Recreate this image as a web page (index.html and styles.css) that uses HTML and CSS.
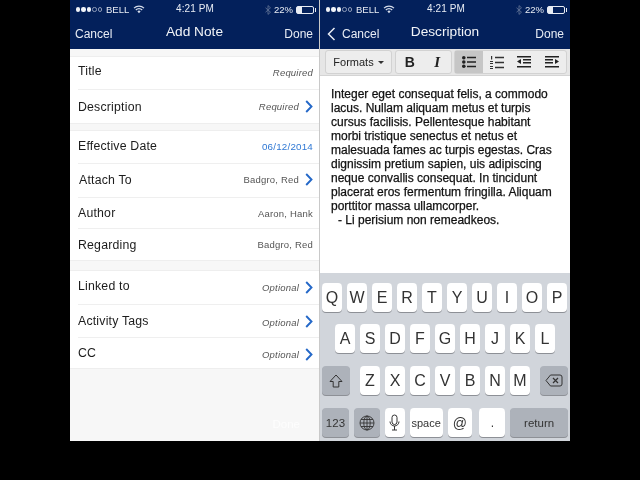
FILE: index.html
```html
<!DOCTYPE html>
<html lang="en">
<head>
  <meta charset="UTF-8">
  <title>Add Note</title>
  <link rel="stylesheet" href="styles.css">
</head>
<body>
  <div class="screens">

    <div class="phone phone-left">
      <div class="topbar">
        <div class="status">
          <div class="status-left">
            <span class="dot"></span><span class="dot"></span><span class="dot"></span><span class="dot off"></span><span class="dot off"></span>
            <span class="carrier">BELL</span>
            <svg class="wifi" width="12" height="9" viewBox="0 0 12 9"><path d="M1 3.200a7 7 0 0 1 10 0M2.800 5a4.500 4.500 0 0 1 6.400 0" fill="none" stroke="#d5dcea" stroke-width="1.200"/><path d="M4.400 6.400a2.200 2.200 0 0 1 3.200 0L6 8.200z" fill="#d5dcea"/></svg>
          </div>
          <span class="time">4:21 PM</span>
          <div class="status-right">
            <svg width="6" height="10" viewBox="0 0 6 10"><path d="M.5 2.800l5 4.400L3 9.400V.6l2.500 2.200-5 4.400" fill="none" stroke="#5d6f93" stroke-width=".9"/></svg>
            <span class="pct">22%</span>
            <span class="battery"><span class="battery-fill"></span></span>
          </div>
        </div>
        <div class="nav">
          <span class="nav-btn">Cancel</span>
          <span class="nav-title">Add Note</span>
          <span class="nav-btn">Done</span>
        </div>
      </div>

      <div class="form">
        <div class="section sec-top">
          <div class="row h33"><span class="label up2">Title</span><span class="value hint up1">Required</span></div>
          <div class="row h33"><span class="label">Description</span><span class="value hint">Required</span>
            <svg class="chev" width="8" height="13" viewBox="0 0 8 13"><path d="M1.200 1l5.300 5.500-5.300 5.500" fill="none" stroke="#2468c8" stroke-width="1.900"/></svg></div>
        </div>
        <div class="section sec-mid">
          <div class="row h33"><span class="label up1">Effective Date</span><span class="value date up1">06/12/2014</span></div>
          <div class="row h34"><span class="label label-nudge up1">Attach To</span><span class="value up1">Badgro, Red</span>
            <svg class="chev up1" width="8" height="13" viewBox="0 0 8 13"><path d="M1.200 1l5.300 5.500-5.300 5.500" fill="none" stroke="#2468c8" stroke-width="1.900"/></svg></div>
          <div class="row h31"><span class="label">Author</span><span class="value">Aaron, Hank</span></div>
          <div class="row h31"><span class="label">Regarding</span><span class="value">Badgro, Red</span></div>
        </div>
        <div class="section">
          <div class="row h34"><span class="label up2">Linked to</span><span class="value hint">Optional</span>
            <svg class="chev" width="8" height="13" viewBox="0 0 8 13"><path d="M1.200 1l5.300 5.500-5.300 5.500" fill="none" stroke="#2468c8" stroke-width="1.900"/></svg></div>
          <div class="row h33"><span class="label">Activity Tags</span><span class="value hint down1">Optional</span>
            <svg class="chev" width="8" height="13" viewBox="0 0 8 13"><path d="M1.200 1l5.300 5.500-5.300 5.500" fill="none" stroke="#2468c8" stroke-width="1.900"/></svg></div>
          <div class="row h30"><span class="label">CC</span><span class="value hint down1">Optional</span>
            <svg class="chev down1" width="8" height="13" viewBox="0 0 8 13"><path d="M1.200 1l5.300 5.500-5.300 5.500" fill="none" stroke="#2468c8" stroke-width="1.900"/></svg></div>
        </div>
        <div class="ghost-done">Done</div>
      </div>
    </div>

    <div class="phone phone-right">
      <div class="topbar">
        <div class="status">
          <div class="status-left">
            <span class="dot"></span><span class="dot"></span><span class="dot"></span><span class="dot off"></span><span class="dot off"></span>
            <span class="carrier">BELL</span>
            <svg class="wifi" width="12" height="9" viewBox="0 0 12 9"><path d="M1 3.200a7 7 0 0 1 10 0M2.800 5a4.500 4.500 0 0 1 6.400 0" fill="none" stroke="#d5dcea" stroke-width="1.200"/><path d="M4.400 6.400a2.200 2.200 0 0 1 3.200 0L6 8.200z" fill="#d5dcea"/></svg>
          </div>
          <span class="time">4:21 PM</span>
          <div class="status-right">
            <svg width="6" height="10" viewBox="0 0 6 10"><path d="M.5 2.800l5 4.400L3 9.400V.6l2.500 2.200-5 4.400" fill="none" stroke="#5d6f93" stroke-width=".9"/></svg>
            <span class="pct">22%</span>
            <span class="battery"><span class="battery-fill"></span></span>
          </div>
        </div>
        <div class="nav">
          <span class="nav-btn back">
            <svg width="9" height="14" viewBox="0 0 9 14"><path d="M7.500 1L1.500 7l6 6" fill="none" stroke="#e8ecf4" stroke-width="1.500"/></svg>
            Cancel
          </span>
          <span class="nav-title">Description</span>
          <span class="nav-btn">Done</span>
        </div>
      </div>

      <div class="toolbar">
        <div class="tb-group tb-formats">Formats <span class="caret"></span></div>
        <div class="tb-group tb-text">
          <span class="tb-btn bold">B</span>
          <span class="tb-btn ital">I</span>
        </div>
        <div class="tb-group tb-lists">
          <span class="tb-btn active">
            <svg width="14" height="12" viewBox="0 0 14 12"><circle cx="1.800" cy="1.800" r="1.800" fill="#222"/><circle cx="1.800" cy="6" r="1.800" fill="#222"/><circle cx="1.800" cy="10.200" r="1.800" fill="#222"/><path d="M5 1.500h9M5 6h9M5 10.500h9" stroke="#222" stroke-width="1.600"/></svg>
          </span>
          <span class="tb-btn">
            <svg width="14" height="13" viewBox="0 0 14 13"><path d="M1 0h1.200v3.400H1zM0 5h3v1H0zM0 7h3v1H0zM0 10h3v1H0zM0 12h3v1H0z" fill="#333"/><path d="M5 1.500h9M5 6.500h9M5 11.500h9" stroke="#333" stroke-width="1.500"/></svg>
          </span>
          <span class="tb-btn">
            <svg width="14" height="12" viewBox="0 0 14 12"><path d="M0 .8h14M6 3.800h8M6 6.800h8M0 10.800h14" stroke="#222" stroke-width="1.600"/><path d="M4 3v5L0 5.500z" fill="#222"/></svg>
          </span>
          <span class="tb-btn">
            <svg width="14" height="12" viewBox="0 0 14 12"><path d="M0 .8h14M0 3.800h8M0 6.800h8M0 10.800h14" stroke="#222" stroke-width="1.600"/><path d="M10 3v5l4-2.500z" fill="#222"/></svg>
          </span>
        </div>
      </div>

      <div class="editor">
        Integer eget consequat felis, a commodo lacus. Nullam aliquam metus et turpis cursus facilisis. Pellentesque habitant morbi tristique senectus et netus et malesuada fames ac turpis egestas. Cras dignissim pretium sapien, uis adipiscing neque convallis consequat. In tincidunt placerat eros fermentum fringilla. Aliquam porttitor massa ullamcorper.
        <div class="signature">- Li perisium non remeadkeos.</div>
      </div>

      <div class="keyboard">
        <div class="kb-row">
          <span class="key">Q</span><span class="key">W</span><span class="key">E</span><span class="key">R</span><span class="key">T</span><span class="key">Y</span><span class="key">U</span><span class="key">I</span><span class="key">O</span><span class="key">P</span>
        </div>
        <div class="kb-row kb-home">
          <span class="key">A</span><span class="key">S</span><span class="key">D</span><span class="key">F</span><span class="key">G</span><span class="key">H</span><span class="key">J</span><span class="key">K</span><span class="key">L</span>
        </div>
        <div class="kb-row kb-third">
          <span class="key dark wide">
            <svg width="14" height="14" viewBox="0 0 14 14"><path d="M7 1l6 6.500H9.800V13H4.200V7.500H1z" fill="none" stroke="#333" stroke-width="1"/></svg>
          </span>
          <div class="kb-letters">
            <span class="key">Z</span><span class="key">X</span><span class="key">C</span><span class="key">V</span><span class="key">B</span><span class="key">N</span><span class="key">M</span>
          </div>
          <span class="key dark wide">
            <svg width="18" height="13" viewBox="0 0 18 13"><path d="M5.500 1H15a2 2 0 0 1 2 2v7a2 2 0 0 1-2 2H5.500L1 6.500z" fill="none" stroke="#333" stroke-width="1"/><path d="M8 4l5 5M13 4l-5 5" stroke="#333" stroke-width="1.200"/></svg>
          </span>
        </div>
        <div class="kb-row kb-bottom">
          <span class="key dark small k-123">123</span>
          <span class="key dark k-globe">
            <svg width="16" height="16" viewBox="0 0 16 16" fill="none" stroke="#333" stroke-width=".9"><circle cx="8" cy="8" r="7"/><ellipse cx="8" cy="8" rx="3.200" ry="7"/><path d="M8 1v14M1 8h14M2 4.500h12M2 11.500h12"/></svg>
          </span>
          <span class="key k-mic">
            <svg width="11" height="17" viewBox="0 0 11 17" fill="none" stroke="#333" stroke-width="1"><rect x="3" y="1" width="5" height="9.500" rx="2.500"/><path d="M1 7.500a4.500 4.500 0 0 0 9 0M5.500 12v4M3 16h5"/></svg>
          </span>
          <span class="key small k-space">space</span>
          <span class="key k-at">@</span>
          <span class="key k-dot">.</span>
          <span class="key dark small k-return">return</span>
        </div>
      </div>
    </div>

  </div>
</body>
</html>
```

FILE: styles.css
```css
* {
  box-sizing: border-box;
}
html, body {
  margin: 0;
  height: 100%;
  background: #000;
  overflow: hidden;
}
body {
  font-family: "Liberation Sans", Arial, sans-serif;
  color: #222;
}
.screens {
  display: flex;
  height: 441px;
  padding-left: 70px;
  filter: blur(.35px);
}
.phone {
  height: 441px;
  background: #f7f7f7;
  display: flex;
  flex-direction: column;
}
.phone-left {
  width: 250px;
  border-right: 1px solid #c9c9c9;
}
.phone-right {
  width: 250px;
  background: #fff;
}

/* top bar */
.topbar {
  height: 49px;
  flex-shrink: 0;
  background: #03205b;
  color: #e8ecf4;
}
.status {
  height: 17px;
  padding: 2px 5px 0 6px;
  display: flex;
  align-items: center;
  position: relative;
  font-size: 9.500px;
}
.status-left {
  display: flex;
  align-items: center;
  gap: 1px;
}
.dot {
  width: 4.400px;
  height: 4.400px;
  border-radius: 50%;
  background: #f0f3f8;
}
.dot.off {
  background: none;
  border: 1px solid #8c9ab8;
}
.carrier {
  margin: 0 3px 0 3px;
}
.time {
  position: absolute;
  left: 107px;
  top: 3px;
  font-size: 10px;
  letter-spacing: .1px;
}
.phone-left .time {
  left: 106px;
}
.status-right {
  margin-left: auto;
  display: flex;
  align-items: center;
  gap: 3px;
}
.battery {
  width: 18px;
  height: 8px;
  border: 1px solid #e8ecf4;
  border-radius: 2px;
  display: block;
  position: relative;
}
.battery::after {
  content: "";
  position: absolute;
  right: -3px;
  top: 1px;
  width: 1px;
  height: 4px;
  background: #e8ecf4;
}
.battery-fill {
  display: block;
  width: 5px;
  height: 100%;
  background: #e8ecf4;
}
.nav {
  height: 32px;
  padding: 0 6px 0 5px;
  display: flex;
  align-items: center;
  justify-content: space-between;
  position: relative;
}
.nav-btn {
  font-size: 12px;
  padding-top: 1px;
}
.nav-btn.back {
  display: flex;
  align-items: center;
  gap: 6px;
  margin-left: 2px;
}
.nav-title {
  position: absolute;
  left: 0;
  right: 0;
  top: 7px;
  text-align: center;
  font-size: 13.700px;
  color: #f2f4f8;
}

/* form */
.form {
  flex: 1;
  padding-top: 7px;
  display: flex;
  flex-direction: column;
  position: relative;
}
.section {
  background: #fff;
  border-top: 1px solid #eeeeee;
  border-bottom: 1px solid #eeeeee;
  padding-left: 8px;
}
.sec-top {
  margin-bottom: 6px;
}
.sec-mid {
  margin-bottom: 9px;
}
.row {
  display: flex;
  align-items: center;
  padding-right: 6px;
  border-bottom: 1px solid #efefef;
}
.row:last-child {
  border-bottom: 0;
}
.h30 { height: 30px; }
.h31 { height: 31px; }
.h33 { height: 33px; }
.h34 { height: 34px; }
.up1 { margin-bottom: 2px; }
.up2 { margin-bottom: 4px; }
.down1 { margin-top: 2px; }
.label {
  font-size: 12.300px;
  letter-spacing: .2px;
  color: #1c1c1c;
}
.label-nudge {
  margin-left: 1px;
}
.value {
  margin-left: auto;
  font-size: 9.500px;
  letter-spacing: .2px;
  color: #555;
}
.hint {
  font-style: italic;
}
.date {
  font-size: 9.800px;
  color: #2f78d4;
}
.chev {
  margin-left: 6px;
}
.ghost-done {
  position: absolute;
  right: 19px;
  bottom: 11px;
  font-size: 11.500px;
  color: #fdfdfd;
}

/* editor toolbar */
.toolbar {
  height: 27px;
  flex-shrink: 0;
  padding: 1px 3px 1px 5px;
  background: #e6e6e6;
  display: flex;
  gap: 3px;
  border-bottom: 1px solid #d4d4d4;
}
.tb-group {
  display: flex;
  align-items: center;
  background: #ededed;
  border: 1px solid #d2d2d2;
  border-radius: 3px;
  font-size: 11px;
  color: #222;
}
.tb-formats {
  width: 67px;
  justify-content: center;
  gap: 4px;
}
.caret {
  width: 0;
  height: 0;
  border: 3px solid transparent;
  border-top: 3px solid #333;
  border-bottom: 0;
}
.tb-text {
  width: 57px;
  margin-right: -1px;
}
.tb-lists {
  flex: 1;
}
.tb-btn {
  flex: 1;
  height: 100%;
  display: flex;
  align-items: center;
  justify-content: center;
}
.tb-btn.active {
  background: #c6c6c6;
}
.bold {
  font-size: 14px;
  font-weight: bold;
}
.ital {
  font-family: "Liberation Serif", serif;
  font-size: 15px;
  font-style: italic;
  font-weight: bold;
}

/* editor text */
.editor {
  flex: 1;
  padding: 11px 15px 0 11px;
  font-size: 12px;
  line-height: 14px;
  color: #111;
  background: #fff;
  -webkit-text-stroke: .25px #111;
}
.signature {
  padding-left: 7px;
}

/* keyboard */
.keyboard {
  height: 168px;
  flex-shrink: 0;
  padding: 10px 2px 0;
  background: #d1d5db;
  display: flex;
  flex-direction: column;
}
.kb-row {
  height: 29px;
  display: flex;
  gap: 5px;
  margin-bottom: 13px;
}
.kb-row:first-child {
  margin-bottom: 12px;
}
.kb-home {
  padding-left: 13px;
}
.kb-third {
  justify-content: space-between;
}
.kb-letters {
  display: flex;
  gap: 5px;
}
.key {
  width: 20px;
  height: 29px;
  display: flex;
  align-items: center;
  justify-content: center;
  background: #fff;
  border-radius: 4px;
  box-shadow: 0 1px 0 #8d9096;
  font-size: 16px;
  color: #333;
}
.key.dark {
  background: #adb2ba;
}
.key.wide {
  width: 28px;
}
.key.small {
  font-size: 11.500px;
}
.k-123 {
  width: 27px;
}
.k-globe {
  width: 26px;
}
.k-space {
  width: 33px;
}
.key.k-space {
  font-size: 11px;
}
.k-at {
  width: 25px;
  font-size: 14px;
}
.k-dot {
  width: 26px;
  margin-left: 2px;
  font-size: 12px;
}
.k-return {
  width: 58px;
}
```
